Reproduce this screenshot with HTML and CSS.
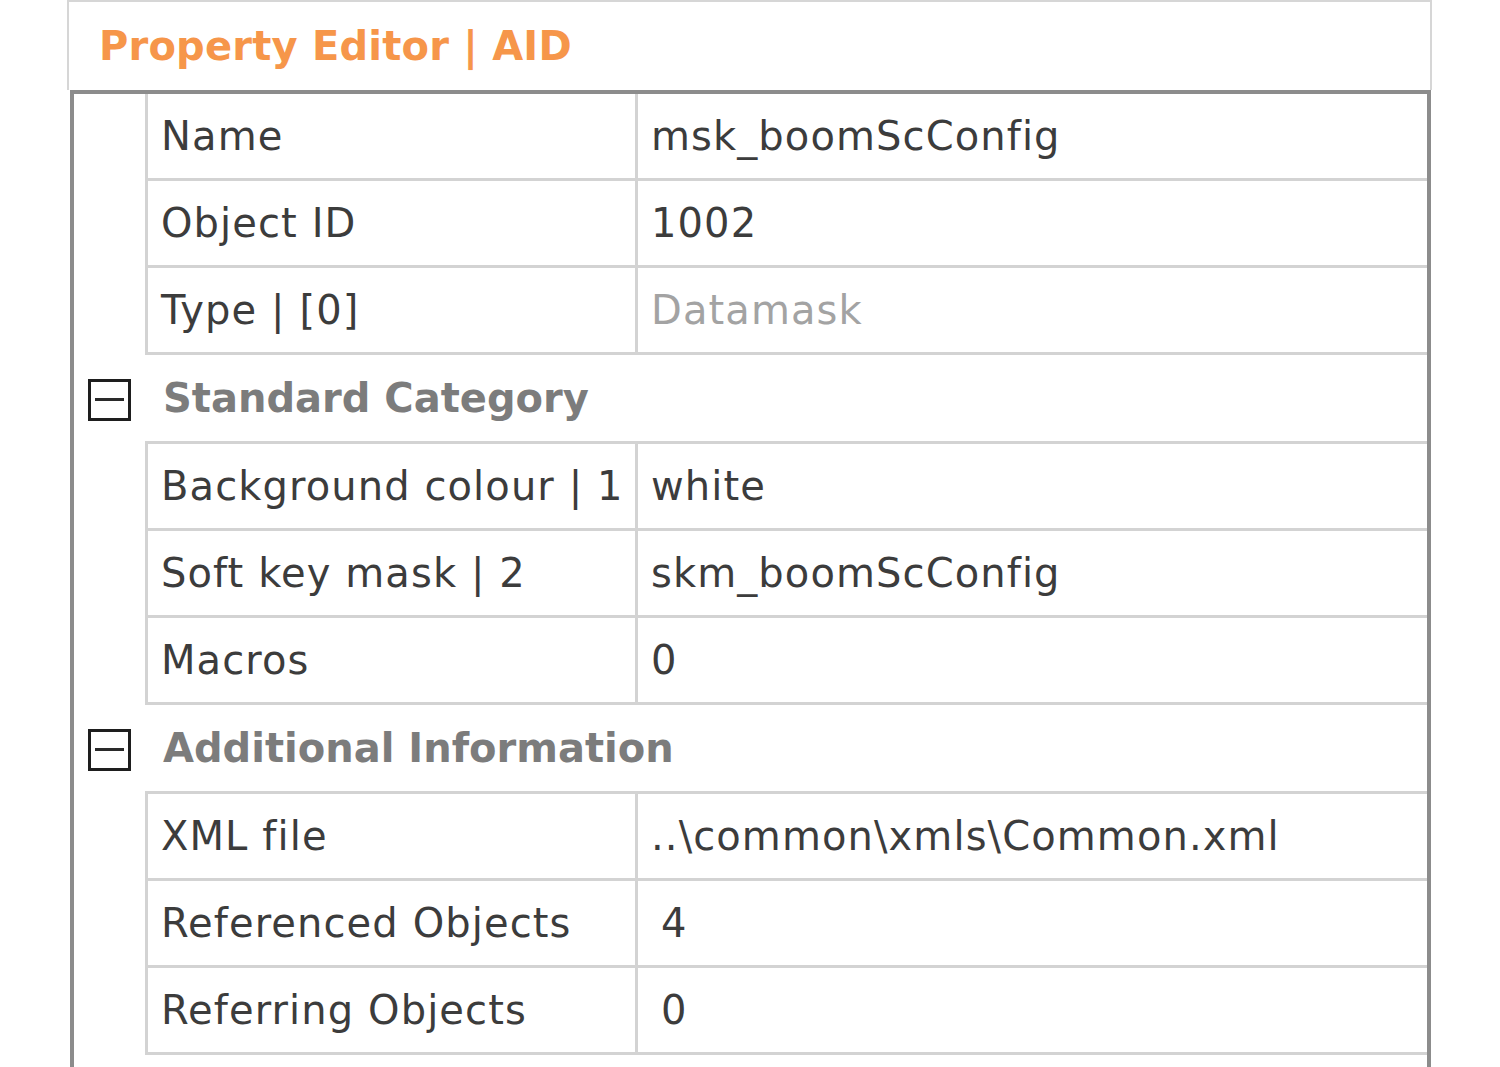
FILE: index.html
```html
<!DOCTYPE html>
<html>
<head>
<meta charset="utf-8">
<link rel="stylesheet" href="styles.css">
</head>
<body>
<div class="panel">
  <div class="header"><span class="title">Property Editor | AID</span></div>
  <div class="grid">
    <div class="group first">
      <div class="key">Name</div><div class="val">msk_boomScConfig</div>
      <div class="key">Object ID</div><div class="val">1002</div>
      <div class="key">Type | [0]</div><div class="val muted">Datamask</div>
    </div>
    <div class="category">
      <div class="toggle-col"><span class="toggle"></span></div>
      <div class="cat-title">Standard Category</div>
    </div>
    <div class="group">
      <div class="key">Background colour | 1</div><div class="val">white</div>
      <div class="key">Soft key mask | 2</div><div class="val">skm_boomScConfig</div>
      <div class="key">Macros</div><div class="val">0</div>
    </div>
    <div class="category">
      <div class="toggle-col"><span class="toggle"></span></div>
      <div class="cat-title">Additional Information</div>
    </div>
    <div class="group">
      <div class="key">XML file</div><div class="val">..\common\xmls\Common.xml</div>
      <div class="key">Referenced Objects</div><div class="val indent">4</div>
      <div class="key">Referring Objects</div><div class="val indent">0</div>
    </div>
  </div>
</div>
</body>
</html>
```
FILE: styles.css
```css
* { box-sizing: border-box; }
html, body { margin: 0; padding: 0; background: #ffffff; }
body { font-family: "DejaVu Sans", "Inter", sans-serif; color: #3c3c3c; overflow: hidden; height: 1067px; }

.panel { margin-left: 67px; width: 1365px; }

.header {
  height: 90px;
  border: 2px solid #d6d6d6;
  border-bottom: none;
  display: flex;
  align-items: center;
  padding-left: 30px;
}
.title {
  color: #f6964a;
  font-weight: 700;
  font-size: 40px;
  letter-spacing: 0.2px;
}

.grid {
  margin-left: 3px;
  width: 1361px;
  border: 4px solid #8c8c8c;
  border-bottom: none;
  padding-bottom: 40px;
}

.group {
  margin-left: 71px;
  display: grid;
  grid-template-columns: 490px 1fr;
  border-top: 3px solid #d3d3d3;
  border-left: 3px solid #d3d3d3;
}
.group.first { border-top: none; }

.key, .val {
  height: 87px;
  border-bottom: 3px solid #d3d3d3;
  display: flex;
  align-items: center;
  font-size: 40px;
  letter-spacing: 1.1px;
}
.key { border-right: 3px solid #d3d3d3; padding-left: 13px; white-space: nowrap; }
.val { padding-left: 13px; white-space: nowrap; }
.val.muted { color: #a3a3a3; }
.val.indent { padding-left: 23px; }

.category {
  height: 86px;
  display: flex;
  align-items: center;
}
.toggle-col { width: 71px; display: flex; align-items: center; padding-left: 14px; }
.toggle {
  width: 43px;
  height: 42px;
  border: 3px solid #1e1e1e;
  position: relative;
  display: block;
  margin-top: 4px;
}
.toggle::after {
  content: "";
  position: absolute;
  left: 4px;
  right: 4px;
  top: 16px;
  height: 3px;
  background: #2a2a2a;
}
.cat-title {
  padding-left: 18px;
  font-size: 40px;
  font-weight: 700;
  color: #7c7c7c;
}
```
